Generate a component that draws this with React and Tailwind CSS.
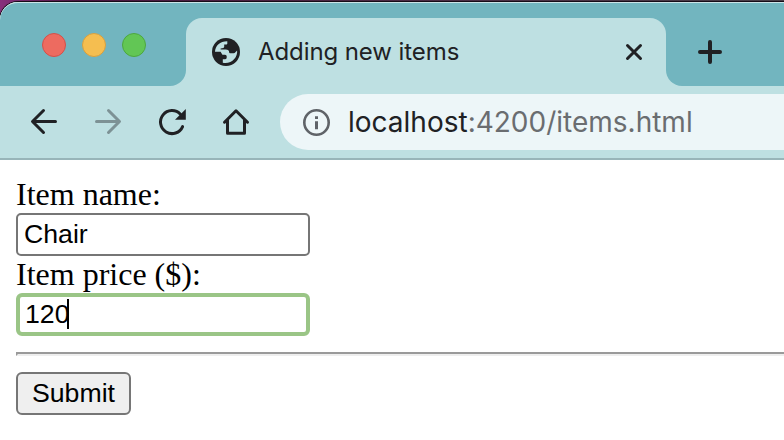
import React from "react";

function GlobeIcon() {
  return (
    <svg width="28" height="28" viewBox="0 0 28 28">
      <circle cx="14" cy="14" r="14" fill="#202124" />
      <path
        d="M3 13.7C3.1 7.8 8.2 3.1 15.3 3.2V5.8Q15.3 6.6 14.4 6.6H12.2V8.7Q12.2 9.7 11.2 9.9L8.6 10.5V11.4H13.7Q17.2 11.4 17.2 14.4Q17.2 15.2 18 15.2H21.6Q22.8 15.2 23.4 14.2L25.1 12.4C25.9 19.3 19.7 26.2 10.8 24.7V21.2H13.2Q14.7 21.2 14.7 19.5V18.2Q14.7 16.7 13 16.7H10.4L8.6 13.7Z"
        fill="#bee0e2"
      />
    </svg>
  );
}

function TabStrip() {
  return (
    <div className="flex h-[84px] bg-[#bee0e2]">
      <div className="flex w-[186px] gap-4 rounded-tl-[18px] rounded-br-[16px] border-t border-[#cbe4e7] bg-[#72b5bf] pt-[30px] pl-[42px]">
        <span className="size-6 rounded-full border border-[#d3504a] bg-[#ed6b60]" />
        <span className="size-6 rounded-full border border-[#d6a040] bg-[#f5be50]" />
        <span className="size-6 rounded-full border border-[#4da73f] bg-[#62c655]" />
      </div>
      <div className="w-[480px] border-t border-[#cbe4e7] bg-[#72b5bf] pt-[15px]">
        <div className="flex h-[68px] items-center rounded-t-[16px] bg-[#bee0e2] pl-[26px] pr-[22px]">
          <GlobeIcon />
          <span className="ml-[18px] font-[Inter,sans-serif] text-[24px] leading-8 tracking-[-0.09px] text-[#202124]">
            Adding new items
          </span>
          <svg className="ml-auto" width="20" height="20" viewBox="0 0 20 20" stroke="#202124" strokeWidth="3" strokeLinecap="round">
            <path d="M3.5 3.5 16.5 16.5M16.5 3.5 3.5 16.5" />
          </svg>
        </div>
      </div>
      <div className="flex-1 rounded-bl-[16px] border-t border-[#cbe4e7] bg-[#72b5bf] pt-[35px] pl-[30px]">
        <svg width="28" height="28" viewBox="0 0 28 28" stroke="#202124" strokeWidth="4" strokeLinecap="round">
          <path d="M4 14H24M14 4V24" />
        </svg>
      </div>
    </div>
  );
}

function Toolbar() {
  return (
    <div className="flex h-[74px] items-start border-b-2 border-[#98b5b9] bg-[#bee0e2] pt-2 pl-7">
      <div className="flex gap-8 pt-3">
        <svg width="32" height="32" viewBox="0 0 32 32" fill="none" stroke="#202124" strokeWidth="3" strokeLinecap="round" strokeLinejoin="round">
          <path d="M27.5 15.5H5M15.5 4.5 4.5 15.5 15.5 26.5" />
        </svg>
        <svg width="32" height="32" viewBox="0 0 32 32" fill="none" stroke="#7d9295" strokeWidth="3" strokeLinecap="round" strokeLinejoin="round">
          <path d="M4.5 15.5H27M16.5 4.5 27.5 15.5 16.5 26.5" />
        </svg>
        <svg width="32" height="32" viewBox="0 0 32 32" fill="none" stroke="#202124" strokeWidth="3" strokeLinecap="round">
          <path d="M26.6 20.6A11.5 11.5 0 1 1 24.4 8.2" />
          <path d="M29.8 3V13.8H19Z" fill="#202124" stroke="none" />
        </svg>
        <svg width="32" height="32" viewBox="0 0 32 32" fill="none" stroke="#202124" strokeWidth="3" strokeLinecap="round" strokeLinejoin="round">
          <path d="M4.5 16.2 16 4.8 27.5 16.2M7.5 14V27.3H24.5V14" />
        </svg>
      </div>
      <div className="ml-7 flex h-14 flex-1 items-center rounded-l-full bg-[#edf6f8] pl-[23px]">
        <svg width="27" height="27" viewBox="0 0 27 27">
          <circle cx="13.5" cy="13.5" r="12.2" fill="none" stroke="#5f6368" strokeWidth="2.6" />
          <path d="M12 7.2H15V10.1H12ZM12 12.2H15V20.2H12Z" fill="#5f6368" />
        </svg>
        <span className="ml-[18px] font-[Inter,sans-serif] text-[28px] leading-9 whitespace-nowrap text-[#6a6d70]">
          <span className="text-[#202124]">localhost</span>:4200/items.html
        </span>
      </div>
    </div>
  );
}

function ItemForm() {
  return (
    <main className="pt-[18px] pl-4 text-black">
      <div className="h-[35px] font-['Liberation_Serif',serif] text-[32px] leading-[33px]">Item name:</div>
      <div className="flex h-[43px] w-[294px] items-center rounded-[5px] border-2 border-[#767676] pb-[2px] pl-[6px] font-['Liberation_Sans',sans-serif] text-[26.67px] leading-8">
        Chair
      </div>
      <div className="h-[37px] font-['Liberation_Serif',serif] text-[32px] leading-[36px]">Item price ($):</div>
      <div className="flex h-[43px] w-[294px] items-center rounded-[6px] border-4 border-[#9ac586] pb-[2px] pl-[5px] font-['Liberation_Sans',sans-serif] text-[26.67px] leading-8">
        120
        <span className="-ml-[2px] h-[30px] w-[2px] bg-black" />
      </div>
      <div className="mt-4 h-1 border-t-2 border-b-2 border-l-2 border-t-[#9a9a9a] border-b-[#eeeeee] border-l-[#9a9a9a]" />
      <div className="mt-4 flex h-[43px] w-[115px] items-center justify-center rounded-[6px] border-2 border-[#767676] bg-[#efefef] pb-[2px] font-['Liberation_Sans',sans-serif] text-[26.67px] leading-8">
        Submit
      </div>
    </main>
  );
}

export default function App() {
  return (
    <div className="h-[440px] w-[784px] overflow-hidden bg-linear-to-r from-[#88307c] via-[#4a163f] via-10% to-[#493f48] pt-[2px]">
      <div className="h-[438px] overflow-hidden rounded-tl-[18px] bg-white shadow-[0_0_0_1px_#160c18]">
        <TabStrip />
        <Toolbar />
        <ItemForm />
      </div>
    </div>
  );
}
